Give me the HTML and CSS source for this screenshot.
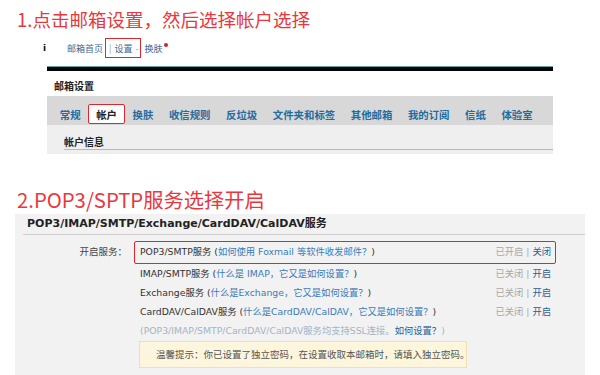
FILE: index.html
```html
<!DOCTYPE html>
<html lang="zh-CN">
<head>
    <meta charset="UTF-8">
    <meta name="viewport" content="width=device-width, initial-scale=1.0">
    <title>开启POP3/SMTP服务</title>
    <link rel="stylesheet" href="styles.css">
</head>

<body>
    <h1 class="step">1.点击邮箱设置，然后选择帐户选择</h1>

    <div class="mailnav">
        <span class="logo">i</span>
        <a class="navlink">邮箱首页</a>
        <span class="mark"><span class="sep">|</span><a class="navlink">设置</a><span class="sep">-</span></span>
        <a class="navlink">换肤</a><span class="dot"></span>
    </div>

    <div class="settings">
        <div class="topbar"></div>
        <h3 class="settings-title">邮箱设置</h3>
        <div class="tabs">
            <a class="tab">常规</a>
            <a class="tab active">帐户</a>
            <a class="tab">换肤</a>
            <a class="tab">收信规则</a>
            <a class="tab">反垃圾</a>
            <a class="tab">文件夹和标签</a>
            <a class="tab">其他邮箱</a>
            <a class="tab">我的订阅</a>
            <a class="tab">信纸</a>
            <a class="tab">体验室</a>
        </div>
        <div class="subpanel">
            <div class="subtitle">帐户信息</div>
        </div>
    </div>

    <h1 class="step step2">2.POP3/SPTP服务选择开启</h1>

    <div class="svc">
        <div class="svc-head">POP3/IMAP/SMTP/Exchange/CardDAV/CalDAV服务</div>
        <div class="svc-body">
            <div class="svc-label">开启服务：</div>
            <div class="svc-list">
                <div class="svc-row mark">
                    <span>POP3/SMTP服务 (<a class="help">如何使用 Foxmail 等软件收发邮件？</a>)</span>
                    <span class="state"><span class="off">已开启</span> | <a class="act">关闭</a></span>
                </div>
                <div class="svc-row">
                    <span>IMAP/SMTP服务 (<a class="help">什么是 IMAP，它又是如何设置？</a>)</span>
                    <span class="state"><span class="off">已关闭</span> | <a class="act">开启</a></span>
                </div>
                <div class="svc-row">
                    <span>Exchange服务 (<a class="help">什么是Exchange，它又是如何设置？</a>)</span>
                    <span class="state"><span class="off">已关闭</span> | <a class="act">开启</a></span>
                </div>
                <div class="svc-row">
                    <span>CardDAV/CalDAV服务 (<a class="help">什么是CardDAV/CalDAV，它又是如何设置？</a>)</span>
                    <span class="state"><span class="off">已关闭</span> | <a class="act">开启</a></span>
                </div>
                <div class="svc-row note">
                    <span>(POP3/IMAP/SMTP/CardDAV/CalDAV服务均支持SSL连接。<a class="help strong">如何设置？</a>)</span>
                </div>
                <div class="tip">温馨提示：你已设置了独立密码，在设置收取本邮箱时，请填入独立密码。</div>
            </div>
        </div>
    </div>
</body>
</html>
```

FILE: styles.css
```css
body {
    margin: 0;
    background: #fff;
    font-family: "DejaVu Sans", "Noto Sans CJK SC", sans-serif;
    color: #333;
}

a {
    cursor: pointer;
}

.step {
    margin: 8px 0 0 17px;
    font-family: "Noto Sans CJK SC", sans-serif;
    font-weight: normal;
    font-size: 18.5px;
    line-height: 22px;
    color: #e8383d;
}

.step2 {
    margin-top: 34px;
    font-size: 20.3px;
}

/* top mail nav */
.mailnav {
    display: flex;
    align-items: center;
    height: 20px;
    margin-top: 8px;
    padding-left: 43px;
    font-family: "Noto Sans CJK SC", sans-serif;
    font-size: 9px;
    color: #4a6b8f;
}

.logo {
    width: 24px;
    font-family: "DejaVu Sans", sans-serif;
    font-weight: bold;
    color: #111;
    font-size: 9px;
}

.navlink {
    color: #3f6592;
}

.sep {
    color: #999;
}

.mailnav .mark {
    display: flex;
    align-items: center;
    gap: 3px;
    height: 20px;
    margin-left: 2px;
    padding: 0 1px 0 3px;
    box-sizing: border-box;
    border: 1.5px solid #e0262b;
}

.mark + .navlink {
    margin-left: 4px;
}

.dot {
    width: 4px;
    height: 4px;
    margin: -6px 0 0 1px;
    border-radius: 50%;
    background: #d4202a;
}

/* settings block */
.settings {
    width: 506px;
    margin: 8px 0 0 47px;
}

.topbar {
    height: 4px;
    border-top: 1px solid #5ea3a8;
    background: #050505;
}

.settings-title {
    margin: 0;
    height: 25px;
    padding: 5px 0 0 7px;
    box-sizing: border-box;
    line-height: 20px;
    font-family: "Noto Sans CJK SC", sans-serif;
    font-size: 10px;
    font-weight: bold;
    color: #222;
}

.tabs {
    display: flex;
    align-items: flex-end;
    height: 29px;
    padding: 0 0 1px 5px;
    box-sizing: border-box;
    background: #d8d8d8;
}

.tab {
    padding: 0 6.8px;
    height: 20px;
    line-height: 20px;
    border: 1px solid transparent;
    box-sizing: border-box;
    font-family: "Noto Sans CJK SC", sans-serif;
    font-size: 10.4px;
    font-weight: bold;
    color: #236c9f;
}

.tab.active {
    background: #fff;
    border: 1.5px solid #e0262b;
    border-radius: 2px;
    color: #222;
}

.subpanel {
    height: 27px;
    padding: 0 0 2px 17px;
    background: #efefef;
}

.subtitle {
    height: 25px;
    padding-top: 8px;
    box-sizing: border-box;
    line-height: 17px;
    border-bottom: 1px solid #b8b8b8;
    font-family: "Noto Sans CJK SC", sans-serif;
    font-size: 10px;
    font-weight: bold;
    color: #222;
}

/* services panel */
.svc {
    width: 570px;
    margin: 4px 0 0 15px;
    padding-bottom: 12px;
    background: #f2f2f2;
}

.svc-head {
    height: 21px;
    margin-left: 8px;
    padding-left: 4px;
    box-sizing: border-box;
    line-height: 20px;
    border-bottom: 1px solid #cfcfcf;
    font-size: 11px;
    font-weight: bold;
    color: #222;
}

.svc-body {
    display: flex;
    padding-top: 6px;
}

.svc-label {
    width: 112px;
    line-height: 21px;
    text-align: right;
    font-family: "Noto Sans CJK SC", sans-serif;
    font-size: 9.5px;
    color: #444;
}

.svc-list {
    width: 422px;
    margin-left: 7px;
}

.svc-row {
    display: flex;
    justify-content: space-between;
    height: 19px;
    line-height: 19px;
    padding: 0 4px 0 5px;
    border: 1px solid transparent;
    border-top: 0;
    border-bottom: 0;
    font-size: 9.3px;
    color: #333;
    white-space: nowrap;
}

.svc-row.mark {
    height: 21px;
    line-height: 19px;
    border: 1.5px solid #e0262b;
    border-radius: 2px;
}

.help {
    color: #3b7bbd;
}

.help.strong {
    color: #2b5f95;
}

.state {
    color: #aaa;
}

.off {
    color: #a8a8a8;
}

.act {
    color: #2b5f95;
}

.note {
    color: #a4b4c6;
}

.tip {
    width: 328px;
    height: 27px;
    margin: 1px 0 0 5px;
    padding-left: 16px;
    box-sizing: border-box;
    line-height: 25px;
    border: 1px solid #f0e0ad;
    background: #fdf6dd;
    font-family: "Noto Sans CJK SC", sans-serif;
    font-size: 9.5px;
    color: #555;
    white-space: nowrap;
}
```
